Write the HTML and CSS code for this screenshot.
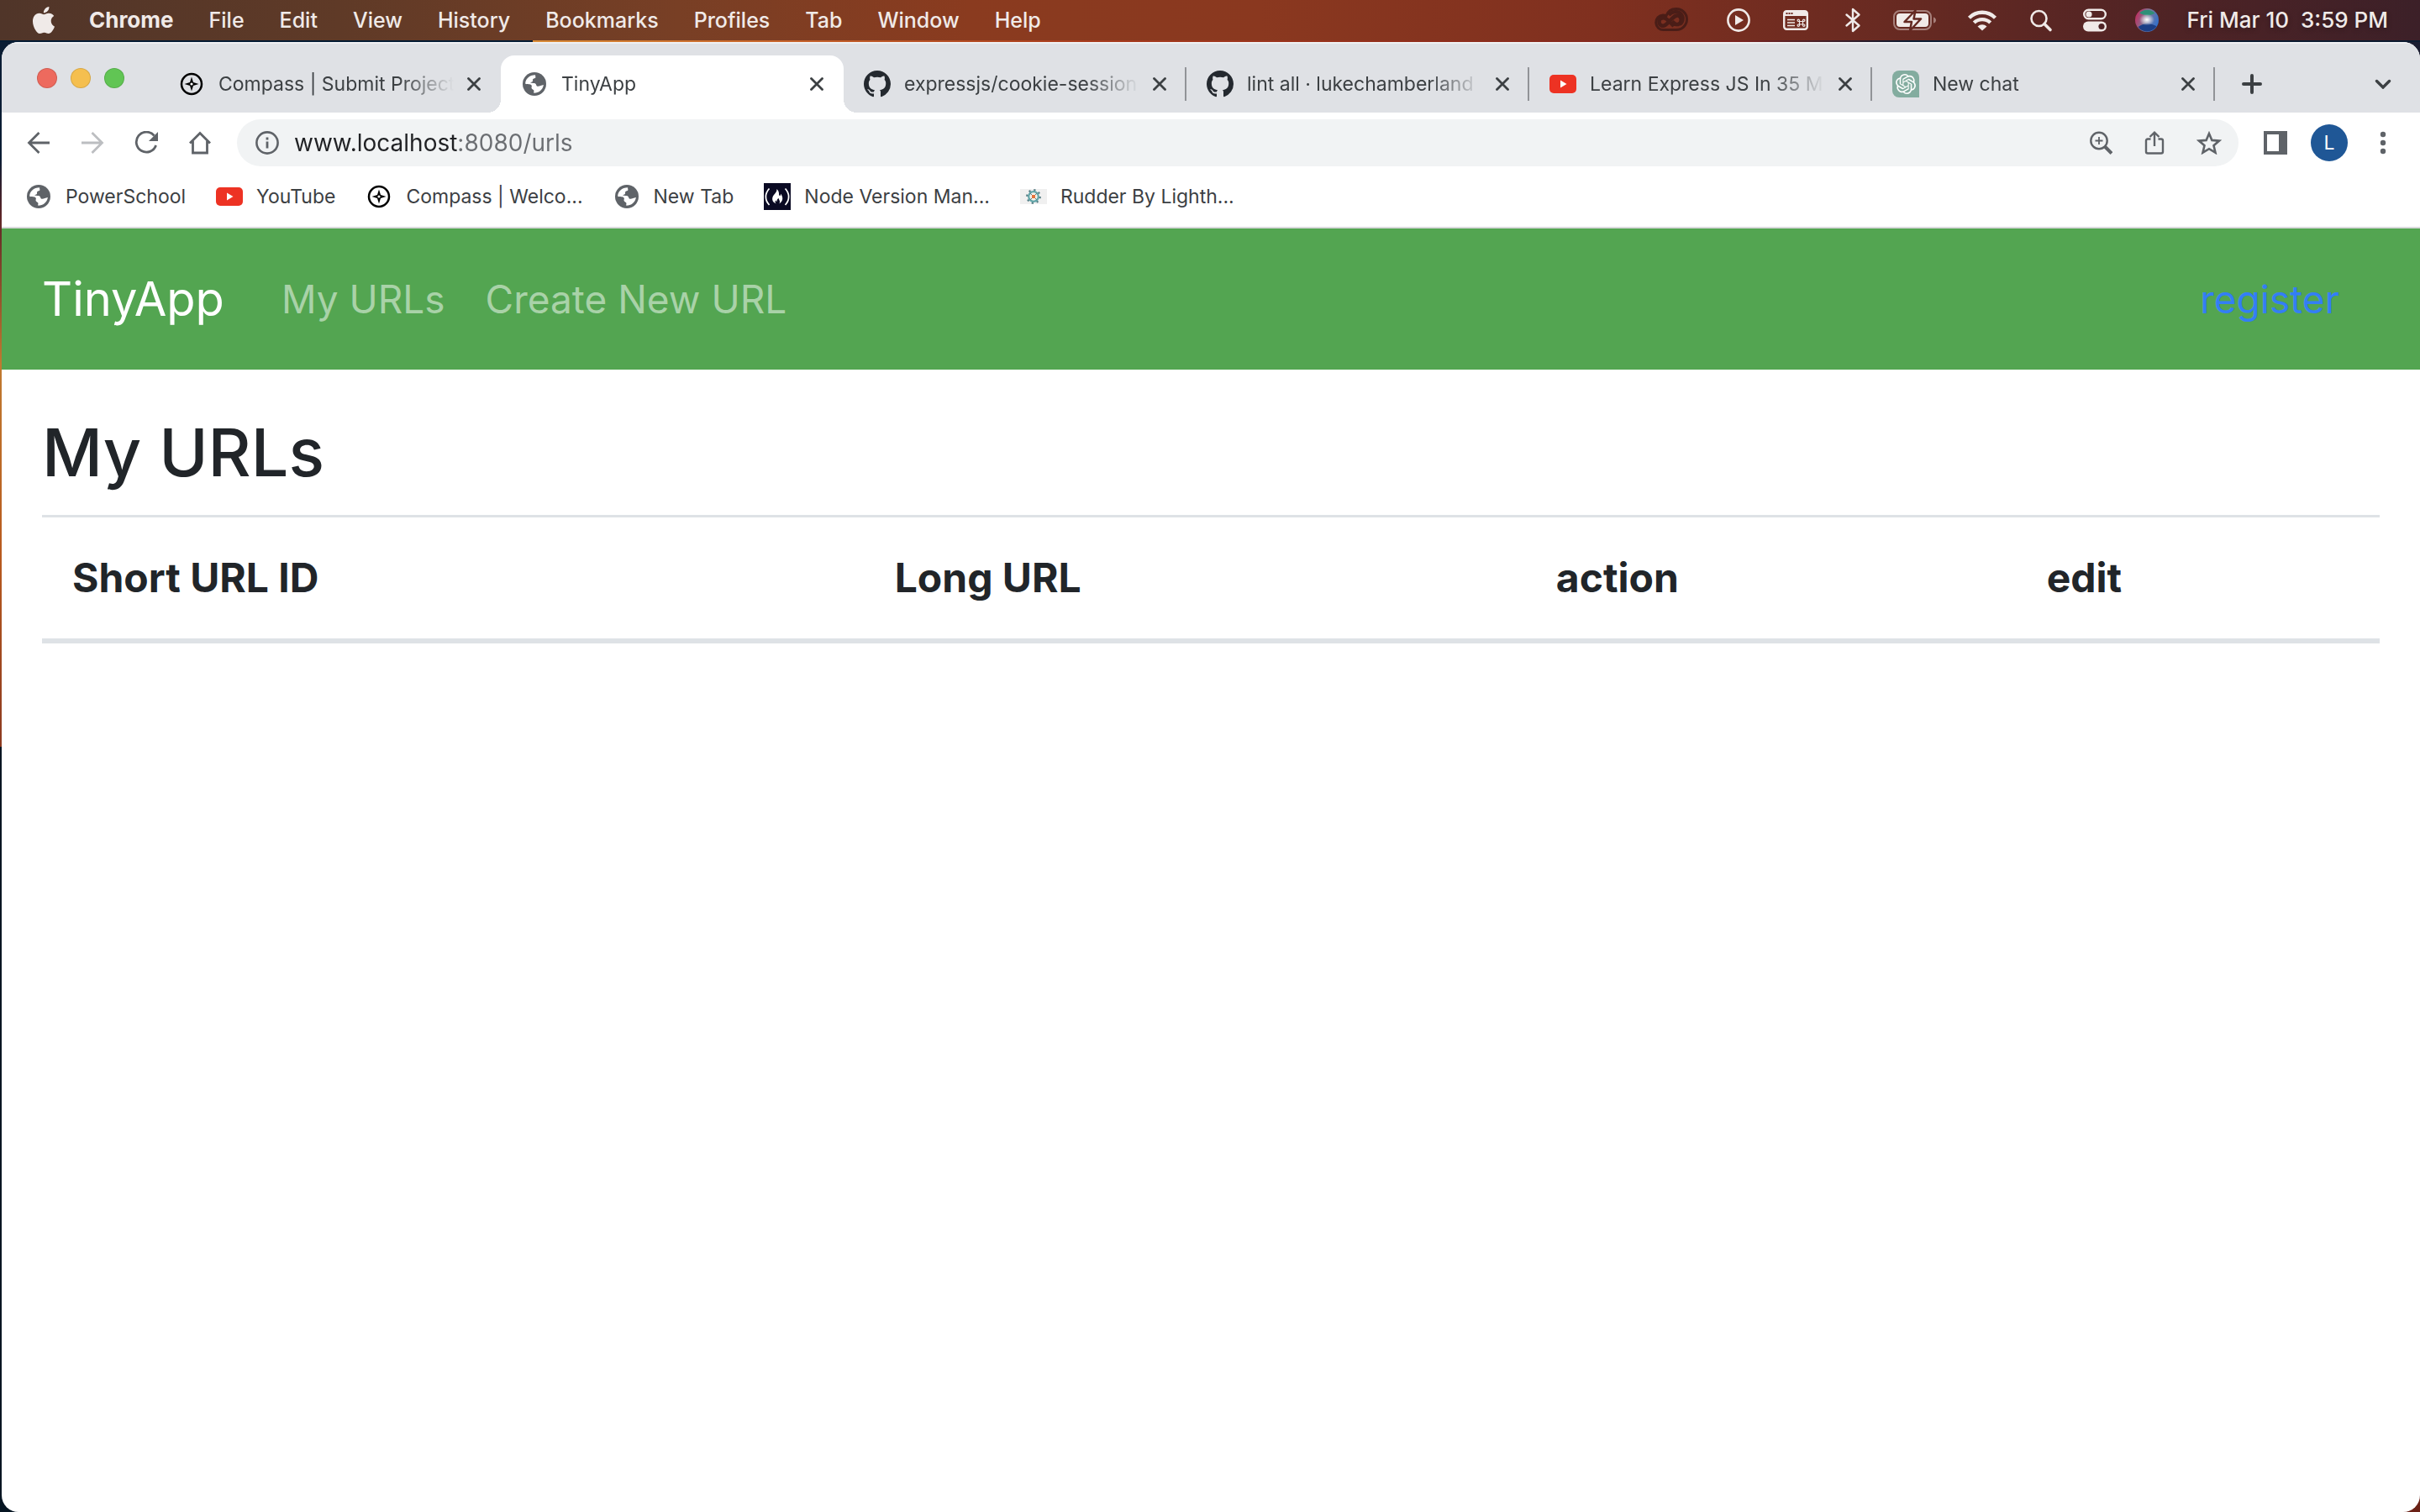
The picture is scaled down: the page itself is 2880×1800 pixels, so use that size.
FILE: index.html
```html
<!DOCTYPE html>
<html lang="en">
<head>
<meta charset="utf-8">
<title>TinyApp</title>
<link rel="stylesheet" href="styles.css">
</head>
<body>
<svg class="sprite" aria-hidden="true">
  <symbol id="globe" viewBox="0 0 28 28"><circle cx="14" cy="14" r="14" fill="#5f6368"/><path fill="#fff" d="M3.2 13.8C3 8 8 3.200 15.200 3.200c-.4 1.200.4 1.800.2 3-.3 1.300-2.600 1-3.200 2-.5.900.3 1.800-.4 2.700-.8.900-2.400.6-2.500 1.800 1.900.2 4.600-.2 6.100 1 1 .9.700 2.600 2 3 2.300.6 4.500-1.200 7.500-1.700-.8 5.700-5.500 9.800-11.500 9.800-.5-.9.300-1.900 0-3-.4-1.300-2.400-1.400-2.800-2.800-.4-1.200.7-2.400 0-3.500-1.400-1.700-4.900-.8-7.400-1.700z"/></symbol>
  <symbol id="compass" viewBox="0 0 28 28"><circle cx="14" cy="14" r="12" fill="none" stroke="#000" stroke-width="2.500"/><path d="M14 5.500l2 6.500 6.500 2-6.500 2-2 6.500-2-6.500-6.500-2 6.500-2z"/><circle cx="14" cy="14" r="1.600" fill="#fff"/></symbol>
  <symbol id="youtube" viewBox="0 0 32 32"><rect y="5" width="32" height="22" rx="5" fill="#ed3223"/><path d="M13 11.500v9l7.500-4.500z" fill="#fff"/></symbol>
  <symbol id="github" viewBox="0 0 16 16"><path fill="#24292f" d="M8 0C3.580 0 0 3.580 0 8c0 3.540 2.290 6.530 5.470 7.590.4.070.55-.17.55-.38 0-.19-.01-.82-.01-1.490-2.010.37-2.530-.49-2.690-.94-.09-.23-.48-.94-.82-1.130-.28-.15-.68-.52-.01-.53.63-.01 1.080.58 1.230.82.72 1.210 1.870.87 2.330.66.070-.52.28-.87.51-1.070-1.780-.2-3.640-.89-3.640-3.950 0-.87.31-1.590.82-2.150-.08-.2-.36-1.020.08-2.120 0 0 .67-.21 2.200.82.64-.18 1.320-.27 2-.27.68 0 1.360.09 2 .27 1.530-1.040 2.200-.82 2.200-.82.44 1.100.16 1.920.08 2.120.51.56.82 1.270.82 2.150 0 3.070-1.870 3.750-3.650 3.950.29.25.54.73.54 1.480 0 1.070-.01 1.930-.01 2.200 0 .21.15.46.55.38A8.013 8.013 0 0016 8c0-4.420-3.580-8-8-8z"/></symbol>
  <symbol id="close" viewBox="0 0 16 16"><path d="M1.500 1.500l13 13m0-13l-13 13" stroke="#3c4043" stroke-width="2.800" stroke-linecap="round"/></symbol>
</svg>

<header class="menubar">
  <nav class="menus" aria-label="Menu bar">
    <svg class="apple" viewBox="0 0 24 24"><path fill="#f0eae8" d="M12.152 6.896c-.948 0-2.415-1.078-3.960-1.040-2.040.027-3.910 1.183-4.961 3.014-2.117 3.675-.546 9.103 1.519 12.090 1.013 1.454 2.208 3.090 3.792 3.039 1.520-.065 2.090-.987 3.935-.987 1.831 0 2.350.987 3.960.948 1.637-.026 2.676-1.480 3.676-2.948 1.156-1.688 1.636-3.325 1.662-3.415-.039-.013-3.182-1.221-3.220-4.857-.026-3.040 2.480-4.494 2.597-4.559-1.429-2.090-3.623-2.324-4.390-2.376-2-.156-3.675 1.090-4.610 1.090zM15.530 3.830c.843-1.012 1.400-2.427 1.245-3.830-1.207.052-2.662.805-3.532 1.818-.78.896-1.454 2.338-1.273 3.714 1.338.104 2.715-.688 3.559-1.701"/></svg>
    <button class="menu app-name">Chrome</button>
    <button class="menu">File</button>
    <button class="menu">Edit</button>
    <button class="menu">View</button>
    <button class="menu">History</button>
    <button class="menu">Bookmarks</button>
    <button class="menu">Profiles</button>
    <button class="menu">Tab</button>
    <button class="menu">Window</button>
    <button class="menu">Help</button>
  </nav>
  <div class="status">
    <svg width="68" height="32" viewBox="0 0 68 32"><g fill="none" stroke="#4a1d17"><path stroke-width="3" d="M25 27.500a8.800 8.800 0 01-1-17.600c2 0 3 .3 4 .8C30 5 35 2.500 40 2.500a12.500 12.500 0 010 25z"/><path stroke-width="4.500" d="M37 23l-7-7c-3-3-6-3.500-8.500-2-3 2-2.500 7 1 8.500 3 1 5-.5 8.500-4.500l3-3c3-3 5-5 8-4.500 5 1 5 9 0 10.500-3 .8-5-1.500-7-3.500"/><path stroke-width="4" d="M31 10c4-5 12-5.500 15-1 3 4 2 10-2 12"/></g></svg>
    <svg width="28" height="28" viewBox="0 0 28 28"><circle cx="14" cy="14" r="12.600" fill="none" stroke="#f0eae8" stroke-width="2.600"/><path d="M10 8v12l10-6z" fill="#f0eae8"/></svg>
    <svg width="44" height="28" viewBox="0 0 44 28"><rect x="8.200" y="3.200" width="27.600" height="21.600" rx="3" fill="none" stroke="#f0eae8" stroke-width="2.400"/><path d="M8 9V5q0-2 2-2h24q2 0 2 2v4z" fill="#f0eae8"/><path d="M10.500 6h2m1 0h2m1 0h2" stroke="#6b2b21" stroke-width="2"/><path d="M12 13.500h9m-9 3.500h9m-9 3.500h9" stroke="#f0eae8" stroke-width="1.600"/><path fill="none" stroke="#f0eae8" stroke-width="1.200" d="M26.500 15.500h4v3.500h-4zM26.500 15.500h-1.300a1.200 1.200 0 111.300-1.300zM30.500 15.500v-1.300a1.200 1.200 0 111.300 1.300zM30.500 19h1.300a1.200 1.200 0 11-1.300 1.300zM26.500 19v1.300a1.200 1.200 0 11-1.300-1.300z"/></svg>
    <svg width="28" height="32" viewBox="0 0 28 32"><path d="M6.500 9.500l15 13-7.500 6.500V3l7.500 6.500-15 13" fill="none" stroke="#f0eae8" stroke-width="2.400" stroke-linejoin="round" stroke-linecap="round"/></svg>
    <svg width="56" height="32" viewBox="0 0 56 32"><rect x="3" y="5" width="44" height="22" rx="7" fill="none" stroke="#a67f7a" stroke-width="2"/><path d="M50 12.500c4 1 4 6 0 7z" fill="#a67f7a"/><rect x="6" y="8" width="38" height="16" rx="4" fill="#f0eae8"/><path d="M28.500 4.500L15.500 18h8.500l-2 10.500L35 14.500h-8.500z" fill="#f0eae8" stroke="#642922" stroke-width="2.500" stroke-linejoin="round"/></svg>
    <svg width="40" height="32" viewBox="0 0 40 32"><g fill="none" stroke="#f0eae8" stroke-width="4.400"><path d="M4.500 13.200a22 22 0 0131 0"/><path d="M10.300 19a14 14 0 0119.400 0"/></g><path d="M14.500 23.500a8 8 0 0111 0L20 28.500z" fill="#f0eae8"/></svg>
    <svg width="36" height="32" viewBox="0 0 36 32"><circle cx="15.500" cy="14" r="9" fill="none" stroke="#f0eae8" stroke-width="2.600"/><path d="M22 20.500l7 7" stroke="#f0eae8" stroke-width="3.600" stroke-linecap="round"/></svg>
    <svg width="28" height="28" viewBox="0 0 28 28"><rect x="1.200" y="1.700" width="25.600" height="10.600" rx="5.300" fill="none" stroke="#f0eae8" stroke-width="2.400"/><circle cx="7" cy="7" r="3.600" fill="#f0eae8"/><rect y="15.500" width="28" height="12" rx="6" fill="#f0eae8"/><circle cx="22" cy="21.500" r="3.600" fill="#4e2325"/></svg>
    <svg width="32" height="32" viewBox="0 0 32 32"><defs><linearGradient id="siri" x1="0" y1=".3" x2="1" y2=".7"><stop offset="0" stop-color="#c02c5e"/><stop offset=".45" stop-color="#7f7897"/><stop offset="1" stop-color="#2c6fd0"/></linearGradient><radialGradient id="glow"><stop offset="0" stop-color="#fff"/><stop offset="1" stop-color="#fff" stop-opacity="0"/></radialGradient></defs><circle cx="16" cy="16" r="14" fill="url(#siri)"/><path d="M7 7.500a13 13 0 0118.500 0c-5 4-13 3-18.500 0z" fill="#2f8f78"/><path d="M5.500 24c6-5 15-5 22-.7-5 7.500-17 8.500-22 .7z" fill="#1c3f86"/><ellipse cx="16" cy="15.500" rx="9" ry="7" fill="url(#glow)"/></svg>
    <time class="clock">Fri Mar 10&nbsp; 3:59 PM</time>
  </div>
</header>

<div class="desktop">
<div class="window">
  <div class="tabstrip">
    <div class="lights"><button class="light red" aria-label="Close window"></button><button class="light yellow" aria-label="Minimize"></button><button class="light green" aria-label="Zoom"></button></div>
    <div class="tabs" role="tablist">
      <div class="tab" role="tab"><svg class="fav small"><use href="#compass"/></svg><span class="tab-title">Compass | Submit Project</span><button class="close" aria-label="Close tab"><svg><use href="#close"/></svg></button></div>
      <div class="tab active" role="tab" aria-selected="true"><svg class="fav small"><use href="#globe"/></svg><span class="tab-title">TinyApp</span><button class="close" aria-label="Close tab"><svg><use href="#close"/></svg></button></div>
      <div class="tab divided" role="tab"><svg class="fav"><use href="#github"/></svg><span class="tab-title">expressjs/cookie-session</span><button class="close" aria-label="Close tab"><svg><use href="#close"/></svg></button></div>
      <div class="tab divided" role="tab"><svg class="fav"><use href="#github"/></svg><span class="tab-title">lint all · lukechamberland</span><button class="close" aria-label="Close tab"><svg><use href="#close"/></svg></button></div>
      <div class="tab divided" role="tab"><svg class="fav"><use href="#youtube"/></svg><span class="tab-title">Learn Express JS In 35 M</span><button class="close" aria-label="Close tab"><svg><use href="#close"/></svg></button></div>
      <div class="tab divided" role="tab"><svg class="fav" viewBox="0 0 32 32"><path d="M8 0h16a8 8 0 018 8v24H8a8 8 0 01-8-8V8a8 8 0 018-8z" fill="#83ac9f"/><g transform="translate(4 4)"><path fill="#fff" d="M22.282 9.821a5.985 5.985 0 0 0-.516-4.910 6.046 6.046 0 0 0-6.510-2.900A6.065 6.065 0 0 0 4.981 4.182a5.985 5.985 0 0 0-3.998 2.900 6.046 6.046 0 0 0 .743 7.097 5.980 5.980 0 0 0 .511 4.911 6.051 6.051 0 0 0 6.515 2.900A5.985 5.985 0 0 0 13.260 24a6.056 6.056 0 0 0 5.772-4.206 5.989 5.989 0 0 0 3.998-2.900 6.056 6.056 0 0 0-.748-7.073zm-9.022 12.608a4.476 4.476 0 0 1-2.876-1.041l.142-.080 4.778-2.758a.795.795 0 0 0 .393-.681v-6.737l2.020 1.169a.071.071 0 0 1 .038.052v5.583a4.504 4.504 0 0 1-4.495 4.494zm-9.661-4.125a4.471 4.471 0 0 1-.535-3.014l.142.085 4.783 2.758a.771.771 0 0 0 .781 0l5.843-3.369v2.332a.080.080 0 0 1-.033.062L9.740 19.950a4.499 4.499 0 0 1-6.141-1.646zM2.341 7.896a4.485 4.485 0 0 1 2.366-1.973V11.600a.766.766 0 0 0 .388.677l5.814 3.354-2.020 1.169a.076.076 0 0 1-.071 0l-4.830-2.787A4.504 4.504 0 0 1 2.341 7.872zm16.596 3.856L13.104 8.364 15.119 7.200a.076.076 0 0 1 .071 0l4.830 2.791a4.494 4.494 0 0 1-.677 8.104v-5.677a.790.790 0 0 0-.407-.667zm2.011-3.023l-.142-.085-4.774-2.782a.776.776 0 0 0-.785 0L9.409 9.230V6.897a.066.066 0 0 1 .028-.062l4.830-2.787a4.499 4.499 0 0 1 6.680 4.660zM8.307 12.863l-2.020-1.164a.080.080 0 0 1-.038-.057V6.074a4.499 4.499 0 0 1 7.376-3.454l-.142.081L8.704 5.459a.795.795 0 0 0-.393.681zm1.098-2.365l2.602-1.500 2.607 1.500v2.999l-2.597 1.500-2.607-1.500Z"/></g></svg><span class="tab-title">New chat</span><button class="close" aria-label="Close tab"><svg><use href="#close"/></svg></button></div>
    </div>
    <button class="icon-btn" aria-label="New tab"><svg width="24" height="24" viewBox="0 0 24 24"><path d="M12 2v20M2 12h20" stroke="#3c4043" stroke-width="4" stroke-linecap="round"/></svg></button>
    <button class="icon-btn search-tabs" aria-label="Search tabs"><svg width="20" height="12" viewBox="0 0 20 12"><path d="M2.500 2.500L10 10l7.500-7.500" fill="none" stroke="#3c4043" stroke-width="3.400" stroke-linecap="round"/></svg></button>
  </div>

  <div class="toolbar">
    <button class="icon-btn" aria-label="Back"><svg width="28" height="28" viewBox="0 0 28 28"><path d="M27 14H3M14.500 2L2.500 14l12 12" fill="none" stroke="#5f6368" stroke-width="2.800"/></svg></button>
    <button class="icon-btn" aria-label="Forward"><svg width="28" height="28" viewBox="0 0 28 28"><path d="M1 14h24M13.500 2l12 12-12 12" fill="none" stroke="#bcbec1" stroke-width="2.800"/></svg></button>
    <button class="icon-btn" aria-label="Reload"><svg width="28" height="28" viewBox="0 0 28 28"><path d="M23.500 5.500A12 12 0 1025.600 17" fill="none" stroke="#5f6368" stroke-width="2.800"/><path d="M28 1v11H17z" fill="#5f6368"/></svg></button>
    <button class="icon-btn" aria-label="Home"><svg width="28" height="28" viewBox="0 0 28 28"><path d="M2 14.500L14 2.500l12 12M5.500 12v14h17V12" fill="none" stroke="#5f6368" stroke-width="2.800"/></svg></button>
    <div class="omnibox">
      <svg width="28" height="28" viewBox="0 0 28 28"><circle cx="14" cy="14" r="12.600" fill="none" stroke="#5f6368" stroke-width="2.600"/><path d="M14 12.500v8M14 7.500v3" stroke="#5f6368" stroke-width="2.800"/></svg>
      <input class="url" type="text" aria-label="Address" value="www.localhost:8080/urls">
      <svg width="28" height="28" viewBox="0 0 28 28"><circle cx="12" cy="11.500" r="9.700" fill="none" stroke="#5f6368" stroke-width="2.400"/><path d="M12 7v9M7.500 11.500h9" stroke="#5f6368" stroke-width="1.800"/><path d="M19 18.500l8 8" stroke="#5f6368" stroke-width="4"/></svg>
      <svg width="28" height="28" viewBox="0 0 28 28"><path d="M9.500 9.500H6q-2 0-2 2v13q0 2 2 2h16q2 0 2-2v-13q0-2-2-2h-3.500M14 18V2M8.500 7L14 1.700 19.500 7" fill="none" stroke="#5f6368" stroke-width="2.400"/></svg>
      <svg width="30" height="28" viewBox="0 0 30 28"><path d="M15 3l3.400 7.900 8.600.7-6.500 5.700 2 8.400-7.500-4.500-7.500 4.500 2-8.400L3 11.600l8.600-.7z" fill="none" stroke="#5f6368" stroke-width="2.600"/></svg>
    </div>
    <button class="icon-btn" aria-label="Side panel"><svg width="28" height="28" viewBox="0 0 28 28"><path fill="#5f6368" fill-rule="evenodd" d="M0 0h28v28H0zM4 4v20h14V4z"/></svg></button>
    <button class="avatar" aria-label="Profile">L</button>
    <button class="icon-btn dots" aria-label="Menu"><svg width="8" height="28" viewBox="0 0 8 28"><g fill="#5f6368"><circle cx="4" cy="4" r="3.200"/><circle cx="4" cy="14" r="3.200"/><circle cx="4" cy="24" r="3.200"/></g></svg></button>
  </div>

  <nav class="bookmarks" aria-label="Bookmarks">
    <a href="#"><svg class="fav small"><use href="#globe"/></svg>PowerSchool</a>
    <a href="#"><svg class="fav"><use href="#youtube"/></svg>YouTube</a>
    <a href="#"><svg class="fav small"><use href="#compass"/></svg>Compass | Welco...</a>
    <a href="#"><svg class="fav small"><use href="#globe"/></svg>New Tab</a>
    <a href="#"><svg class="fav" viewBox="0 0 32 32"><path fill="#0a0a23" d="M0 0h32v32H0z"/><path d="M6.500 6.500c-5.500 6-5.500 13.500 0 19.500m19-19.500c5.500 6 5.500 13.500 0 19.500" fill="none" stroke="#fff" stroke-width="1.800"/><path d="M15.500 7c4 4 1.500 7 3.500 8 1 .2 1.300-1 .9-2.500 2.800 3 4 8.500-1.400 12 1.500-3.500-.5-4-.8-6.500-2 1-2 2.500-2.300 4-1-.2-1-1-1-1.700-1.500 1.700-1 3 .3 4.200-5.500-2-5.500-7-2.700-10.500 2-2.500 3.700-4 3.500-7z" fill="#fff"/></svg>Node Version Man...</a>
    <a href="#"><svg class="fav" viewBox="0 0 32 32"><path fill="#f0f0f0" d="M0 7h32v18H0z"/><circle cx="16" cy="16" r="7.600" fill="none" stroke="#587f86" stroke-width="2.600" stroke-dasharray="2.200 3.770"/><circle cx="16" cy="16" r="5.800" fill="#f4efe6" stroke="#62a6aa" stroke-width="2.200"/><path d="M12 12l8 8m0-8l-8 8" stroke="#587f86"/><rect x="14" y="14" width="4" height="4" fill="#e2733c"/></svg>Rudder By Lighth...</a>
  </nav>

  <div class="page">
    <nav class="navbar" aria-label="TinyApp">
      <a class="brand" href="#">TinyApp</a>
      <a class="nav-link" href="#">My URLs</a>
      <a class="nav-link" href="#">Create New URL</a>
      <a class="register" href="#">register</a>
    </nav>
    <main class="container">
      <h1>My URLs</h1>
      <table>
        <thead><tr><th scope="col">Short URL ID</th><th scope="col">Long URL</th><th scope="col">action</th><th scope="col">edit</th></tr></thead>
        <tbody></tbody>
      </table>
    </main>
  </div>
</div>
</div>
</body>
</html>
```
FILE: styles.css
```css
* { box-sizing: border-box; }

body {
  margin: 0;
  min-height: 100vh;
  display: flex;
  flex-direction: column;
  font-family: Inter, "Liberation Sans", sans-serif;
  color: #212529;
}

button {
  padding: 0;
  border: 0;
  background: none;
  font: inherit;
  color: inherit;
}

a { color: inherit; text-decoration: none; }
svg { display: block; flex: none; }
.sprite { display: none; }

/* System menu bar */
.menubar {
  height: 48px;
  display: flex;
  justify-content: space-between;
  align-items: center;
  padding: 0 38px 0 36px;
  background: linear-gradient(to right, #503529, #5f3a27 14%, #783f25 28%, #8a3b1f 40%, #8a381f 52%, #80301f 66%, #642922 80%, #4e2325 90%, #3c2028);
  color: #f0eae8;
  font-size: 25px;
  line-height: 32px;
  font-weight: 500;
  text-shadow: 0 2px 6px rgba(0, 0, 0, .3);
}

.menus { display: flex; align-items: center; gap: 42px; }
.apple { width: 32px; height: 32px; margin-right: -4px; }
.app-name { font-size: 26px; font-weight: 700; }

.status { display: flex; align-items: center; gap: 32px; }
.clock { font-size: 26px; }

/* Desktop wallpaper showing round the window */
.desktop {
  flex: 1;
  display: flex;
  padding: 2px 0 0 2px;
  background:
    linear-gradient(to right, #041b33 22%, #d98a35 22%, #c8642a 32%, #a83a1c 45%, #8f2c1b 60%, #7a2320 72%, #0b1a30 79%) 0 0 / 100% 2px no-repeat,
    linear-gradient(to bottom, #0a1c33 8%, #5e2527 12%, #c07a30 22%, #b85a1e 35%, #8c3a20 48%, #061522 48%) 0 0 / 50% 100% no-repeat,
    linear-gradient(to bottom, #1a1c30, #6b2116);
}

.window {
  flex: 1;
  min-width: 0;
  display: flex;
  flex-direction: column;
  overflow: hidden;
  border-radius: 20px;
  background: #fff;
}

/* Tab strip */
.tabstrip {
  height: 84px;
  display: flex;
  align-items: center;
  padding: 16px 28px 0 42px;
  background: #dfe1e5;
  box-shadow: inset 0 2px #eff0f2;
}

.lights { display: flex; gap: 16px; padding-bottom: 14px; }
.light { width: 24px; height: 24px; border-radius: 50%; border: 1px solid rgba(0, 0, 0, .12); }
.red { background: #ed6a5e; }
.yellow { background: #f5bf4f; }
.green { background: #61c554; }

.tabs { display: flex; width: 2448px; margin-left: 40px; align-self: stretch; }

.tab {
  position: relative;
  flex: 1;
  min-width: 0;
  display: flex;
  align-items: center;
  gap: 8px;
  padding: 0 16px 0 24px;
  border-radius: 16px 16px 0 0;
  font-size: 23px;
  line-height: 32px;
  color: #3c4043;
}

.tab.active { background: #fff; }

/* Flared feet of the selected tab */
.tab.active::before,
.tab.active::after {
  content: "";
  position: absolute;
  bottom: 0;
  width: 16px;
  height: 16px;
}
.tab.active::before { right: 100%; background: radial-gradient(circle at 0 0, transparent 16px, #fff 16px); }
.tab.active::after { left: 100%; background: radial-gradient(circle at 100% 0, transparent 16px, #fff 16px); }

.tab.divided { background: linear-gradient(#919397, #919397) right center / 2px 40px no-repeat; }

.tab-title {
  flex: 1;
  min-width: 0;
  margin-left: 8px;
  overflow: hidden;
  white-space: nowrap;
  mask-image: linear-gradient(to right, #000 calc(100% - 64px), transparent);
}

.fav { width: 32px; height: 32px; }
.fav.small { padding: 2px; }

.close { width: 32px; height: 32px; display: grid; place-items: center; }
.close svg { width: 16px; height: 16px; }

.icon-btn { width: 32px; height: 32px; display: grid; place-items: center; flex: none; }
.tabstrip .icon-btn { margin-left: 28px; }
.tabstrip .search-tabs { margin-left: auto; }

/* Toolbar */
.toolbar {
  height: 72px;
  display: flex;
  align-items: center;
  gap: 32px;
  padding: 0 28px;
}

.omnibox {
  flex: 1;
  height: 56px;
  display: flex;
  align-items: center;
  gap: 36px;
  margin: 0 -4px;
  padding: 0 20px 0 22px;
  border-radius: 28px;
  background: #f1f3f4;
}

.url {
  flex: 1;
  min-width: 0;
  margin-left: -18px;
  padding: 0;
  border: 0;
  outline: 0;
  font: 28px/40px Inter, "Liberation Sans", sans-serif;
  color: transparent;
  background: linear-gradient(to right, #202124 194px, #6b6e72 194px);
  background-clip: text;
}

.avatar {
  width: 44px;
  height: 44px;
  margin: 0 -6px;
  border-radius: 50%;
  background: #1f5796;
  color: #fff;
  font-size: 23px;
}

/* Bookmarks bar */
.bookmarks {
  height: 66px;
  display: flex;
  gap: 36px;
  padding: 12px 28px 0;
  border-bottom: 2px solid #d9dadc;
  font-size: 23px;
  line-height: 32px;
  color: #3c4043;
}
.bookmarks a { display: flex; gap: 16px; height: 32px; white-space: nowrap; }

/* TinyApp page */
.page { flex: 1; font-size: 46px; line-height: 72px; }

.navbar {
  display: flex;
  align-items: center;
  gap: 48px;
  height: 168px;
  padding: 0 96px 0 48px;
  background: #53a551;
}
.brand { margin-right: 20px; font-size: 56px; color: #fff; }
.nav-link { color: #a9d2a8; }
.register { margin-left: auto; color: #337ef5; }

.container { padding: 48px; }

h1 { margin: 0 0 24px; font-size: 79px; line-height: 101px; font-weight: 500; }

table { width: 100%; border-collapse: collapse; font-size: 48px; }
th {
  padding: 36px;
  border-top: 3px solid #dee2e6;
  border-bottom: 6px solid #dee2e6;
  text-align: left;
  font-weight: 700;
}
```
